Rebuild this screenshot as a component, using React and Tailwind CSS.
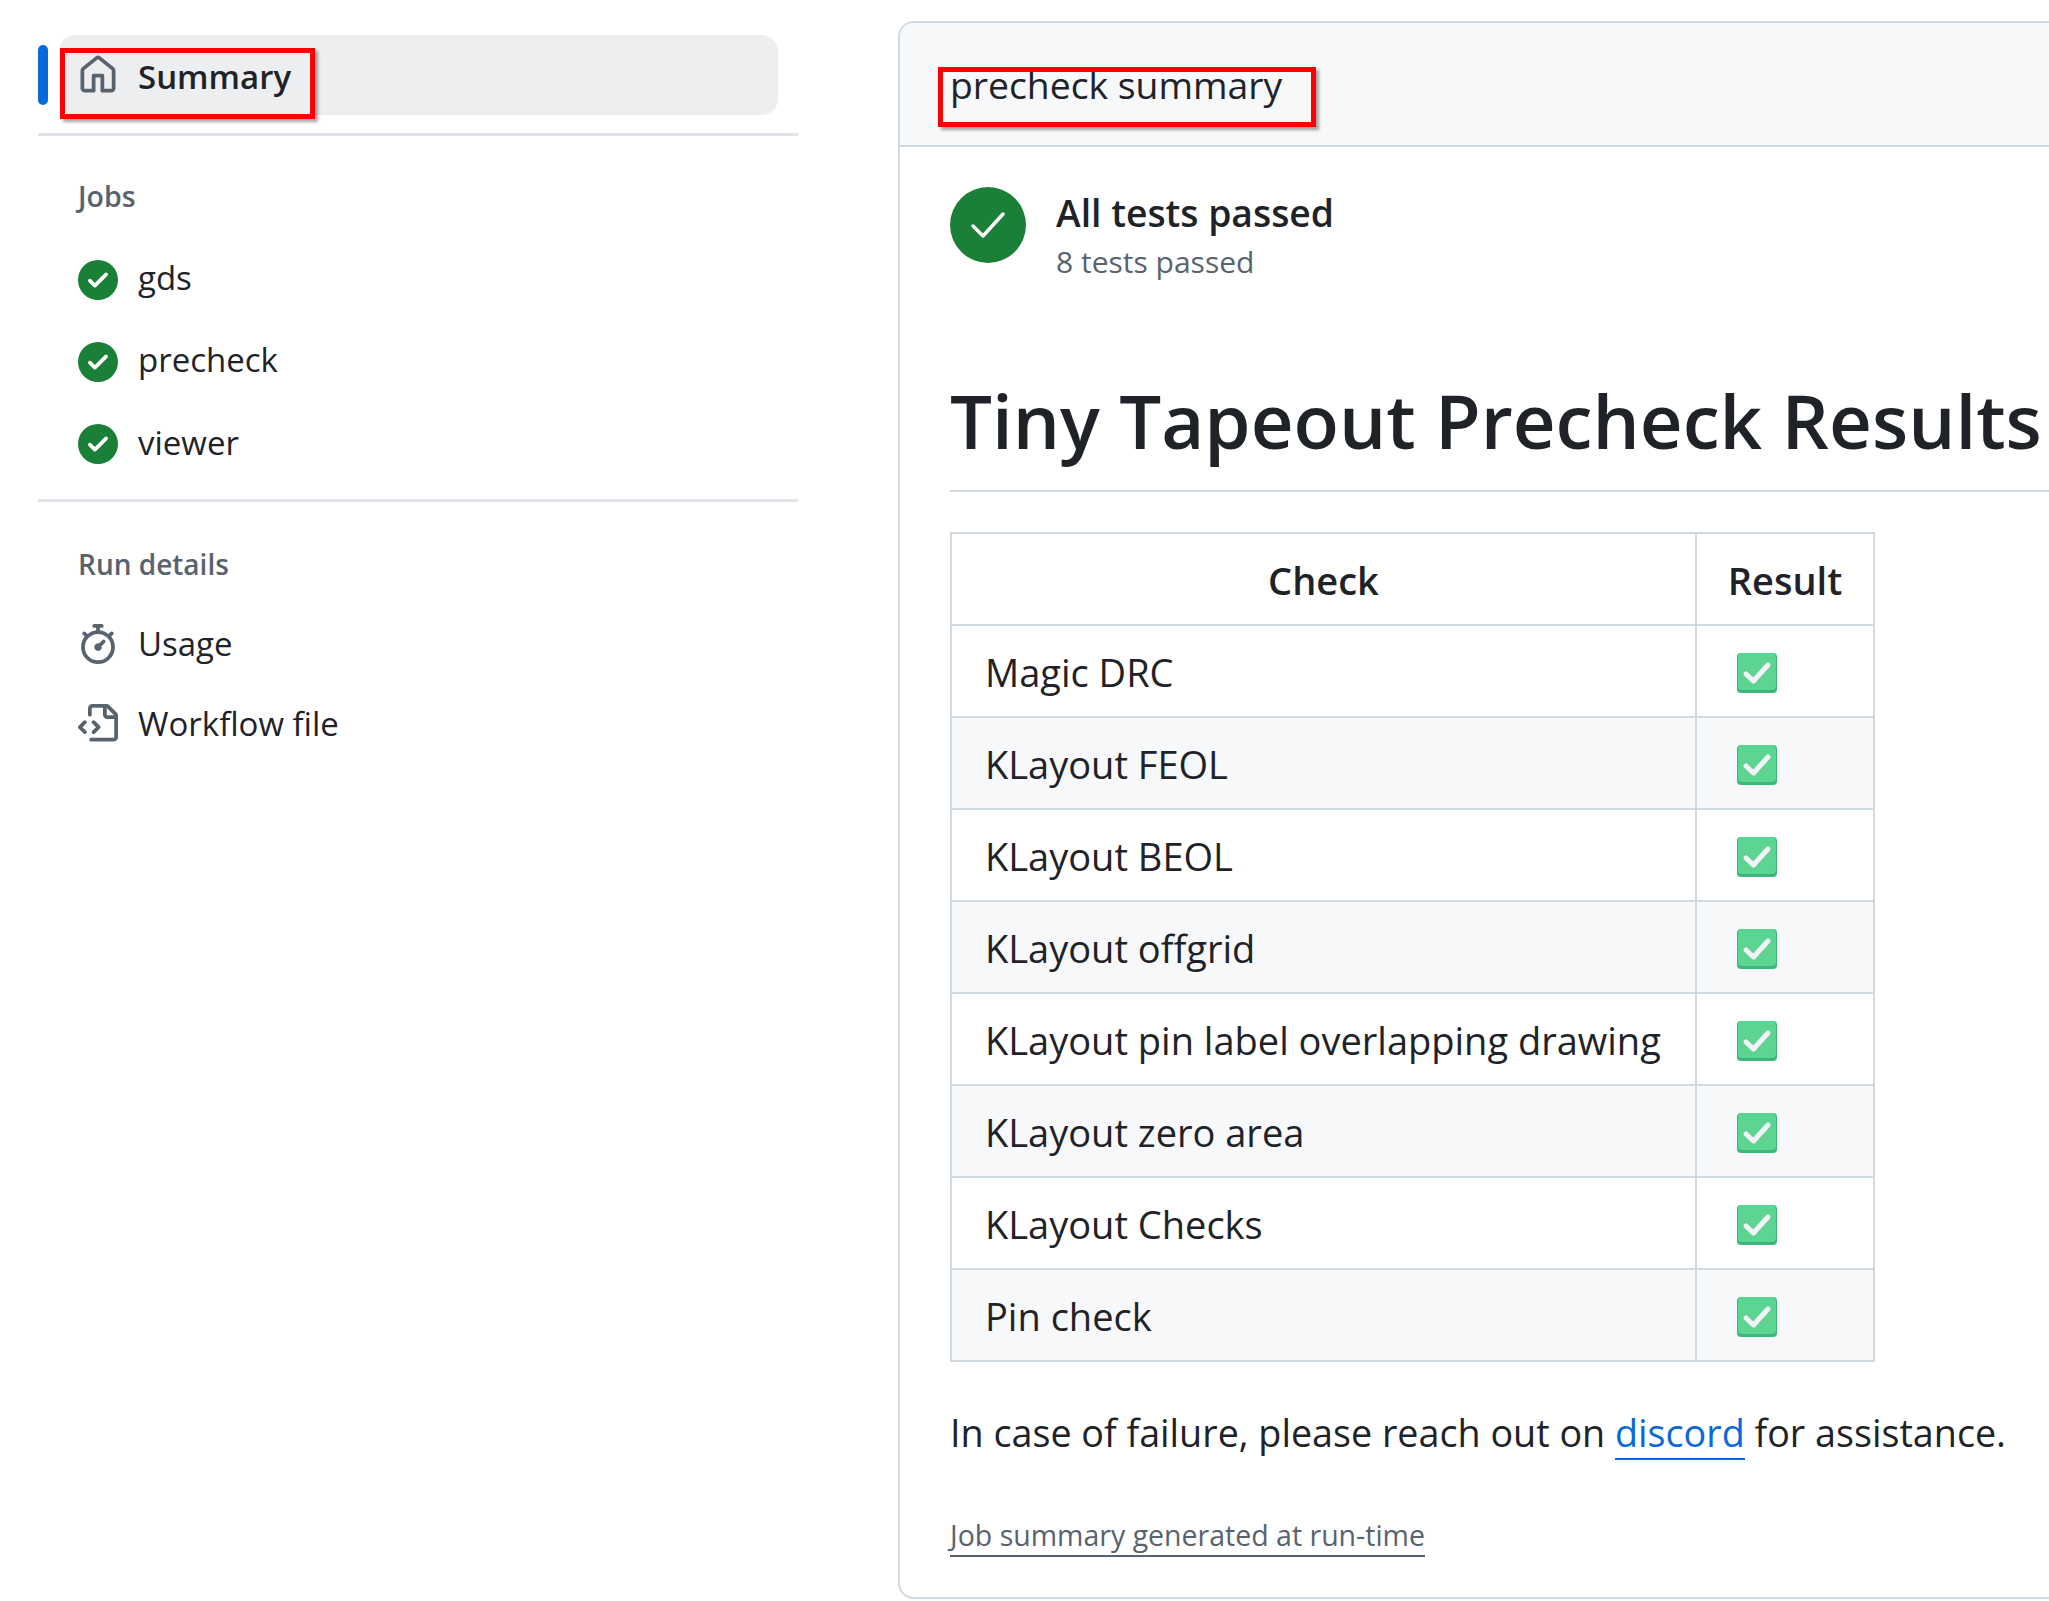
import React from "react";

const font = { fontFamily: '"Open Sans", "Noto Sans", sans-serif' };

const paths = {
  home: "M6.906.664a1.749 1.749 0 0 1 2.187 0l5.25 4.2c.415.332.657.835.657 1.367v7.019A1.75 1.75 0 0 1 13.25 15h-3.5a.75.75 0 0 1-.75-.75V9H7v5.25a.75.75 0 0 1-.75.75h-3.5A1.75 1.75 0 0 1 1 13.25V6.23c0-.531.242-1.034.657-1.366l5.25-4.2Zm1.25 1.171a.25.25 0 0 0-.312 0l-5.25 4.2a.25.25 0 0 0-.094.196v7.019c0 .138.112.25.25.25H5.5V8.25a.75.75 0 0 1 .75-.75h3.5a.75.75 0 0 1 .75.75v5.25h2.75a.25.25 0 0 0 .25-.25V6.23a.25.25 0 0 0-.094-.195Z",
  check: "M8 16A8 8 0 1 1 8 0a8 8 0 0 1 0 16Zm3.78-9.72a.751.751 0 0 0-.018-1.042.751.751 0 0 0-1.042-.018L6.75 9.19 5.28 7.72a.751.751 0 0 0-1.042.018.751.751 0 0 0-.018 1.042l2 2a.75.75 0 0 0 1.06 0Z",
  stopwatch: "M5.75.75A.75.75 0 0 1 6.5 0h3a.75.75 0 0 1 0 1.5h-.75v1l-.001.041a6.724 6.724 0 0 1 3.464 1.435l.007-.006.75-.75a.751.751 0 0 1 1.042.018.751.751 0 0 1 .018 1.042l-.75.75-.006.007a6.75 6.75 0 1 1-10.548 0L2.72 5.03l-.75-.75a.751.751 0 0 1 .018-1.042.751.751 0 0 1 1.042-.018l.75.75.007.006A6.72 6.72 0 0 1 7.25 2.541V1.5H6.5a.75.75 0 0 1-.75-.75ZM8 14.5a5.25 5.25 0 1 0-.001-10.501A5.25 5.25 0 0 0 8 14.5Zm.389-6.7 1.33-1.33a.75.75 0 1 1 1.061 1.06L9.45 8.861A1.503 1.503 0 0 1 8 10.75a1.499 1.499 0 1 1 .389-2.95Z",
  file: "M4 1.75C4 .784 4.784 0 5.75 0h5.586c.464 0 .909.184 1.237.513l2.914 2.914c.329.328.513.773.513 1.237v8.586A1.75 1.75 0 0 1 14.25 15h-9a.75.75 0 0 1 0-1.5h9a.25.25 0 0 0 .25-.25V6h-2.75A1.75 1.75 0 0 1 10 4.25V1.5H5.75a.25.25 0 0 0-.25.25v2.5a.75.75 0 0 1-1.5 0Zm1.72 4.97a.75.75 0 0 1 1.06 0l2 2a.75.75 0 0 1 0 1.06l-2 2a.749.749 0 0 1-1.275-.326.749.749 0 0 1 .215-.734l1.47-1.47-1.47-1.47a.75.75 0 0 1 0-1.06ZM3.28 7.78 1.81 9.25l1.47 1.47a.751.751 0 0 1-.018 1.042.751.751 0 0 1-1.042.018l-2-2a.75.75 0 0 1 0-1.06l2-2a.751.751 0 0 1 1.042.018.751.751 0 0 1 .018 1.042Zm8.22-6.218V4.25c0 .138.112.25.25.25h2.688l-.011-.013-2.914-2.914-.013-.011Z",
};

const checks = [
  "Magic DRC",
  "KLayout FEOL",
  "KLayout BEOL",
  "KLayout offgrid",
  "KLayout pin label overlapping drawing",
  "KLayout zero area",
  "KLayout Checks",
  "Pin check",
];

function Octicon({ d, className }) {
  return (
    <svg viewBox="0 0 16 16" fill="currentColor" className={className}>
      <path d={d} />
    </svg>
  );
}

function CheckEmoji() {
  return (
    <svg viewBox="0 0 40 40" className="w-[40px] h-[40px] block">
      <rect x="0" y="0" width="40" height="40" rx="4" fill="#3fb57c" />
      <rect x="1" y="0" width="38" height="37" rx="4" fill="#5cd593" />
      <path d="M9 21l7.5 7L31 12" fill="none" stroke="#f3f1fa" strokeWidth="5" strokeLinecap="round" strokeLinejoin="round" />
    </svg>
  );
}

function RedBox({ className }) {
  return <div className={`absolute border-[5px] border-[#ff0000] shadow-[3px_3px_3px_rgba(0,0,0,0.35)] ${className}`} />;
}

function SideItem({ icon, iconClass, label, height }) {
  return (
    <div className={`flex items-center pl-[40px] ${height}`}>
      <Octicon d={icon} className={`w-[40px] h-[40px] shrink-0 ${iconClass}`} />
      <span className="ml-[20px] text-[33px] text-[#1f2328]">{label}</span>
    </div>
  );
}

export default function App() {
  return (
    <div style={font} className="relative flex w-[2049px] h-[1601px] overflow-hidden bg-white">
      <aside className="w-[760px] ml-[38px] mr-[100px] shrink-0">
        <div className="flex items-center h-[80px] mt-[35px] relative">
          <div className="absolute left-0 top-[10px] w-[10px] h-[60px] rounded-full bg-[#0969da]" />
          <div className="flex items-center ml-[21px] pl-[19px] w-[719px] h-[80px] rounded-[16px] bg-[#eceef0]">
            <Octicon d={paths.home} className="w-[40px] h-[40px] text-[#59636e]" />
            <span className="ml-[20px] pt-[4px] text-[33px] font-semibold text-[#1f2328]">Summary</span>
          </div>
        </div>
        <div className="mt-[18px] border-t-[3px] border-[#e1e5ea]" />
        <div className="mt-[40px] pl-[40px] text-[28.5px] leading-[40px] font-semibold text-[#59636e]">Jobs</div>
        <div className="mt-[21px]">
          <SideItem icon={paths.check} iconClass="mt-[3px] text-[#1a7f37]" label="gds" height="h-[82px]" />
          <SideItem icon={paths.check} iconClass="mt-[3px] text-[#1a7f37]" label="precheck" height="h-[82px]" />
          <SideItem icon={paths.check} iconClass="mt-[3px] text-[#1a7f37]" label="viewer" height="h-[83px]" />
        </div>
        <div className="mt-[15px] border-t-[3px] border-[#e1e5ea]" />
        <div className="mt-[42px] pl-[40px] text-[28px] leading-[40px] font-semibold text-[#59636e]">Run details</div>
        <div className="mt-[20px]">
          <SideItem icon={paths.stopwatch} iconClass="text-[#59636e]" label="Usage" height="h-[80px]" />
          <SideItem icon={paths.file} iconClass="text-[#59636e]" label="Workflow file" height="h-[80px]" />
        </div>
      </aside>

      <main className="mt-[21px] mb-[2px] w-[1300px] shrink-0 border-2 border-[#d1d9e0] rounded-[16px] overflow-hidden">
        <div className="flex items-center h-[124px] pl-[50px] pt-[1px] bg-[#f6f8fa] border-b-2 border-[#d1d9e0] text-[37.3px] text-[#1f2328]">
          precheck summary
        </div>
        <div className="pl-[50px] pt-[40px]">
          <div className="flex items-center h-[76px]">
            <svg viewBox="0 0 76 76" className="w-[76px] h-[76px] shrink-0">
              <circle cx="38" cy="38" r="38" fill="#1a7f37" />
              <path d="M23 39l10 10 20-22" fill="none" stroke="#fff" strokeWidth="3.5" strokeLinecap="round" strokeLinejoin="round" />
            </svg>
            <div className="ml-[30px] mt-[24px]">
              <div className="text-[37.3px] leading-[50px] font-semibold text-[#1f2328]">All tests passed</div>
              <div className="text-[30px] leading-[48px] text-[#59636e]">8 tests passed</div>
            </div>
          </div>

          <h1 className="mt-[106px] pb-[19px] text-[74.4px] leading-[102px] font-semibold text-[#1f2328] border-b-2 border-[#d1d9e0] whitespace-nowrap">
            Tiny Tapeout Precheck Results
          </h1>

          <table className="mt-[40px] w-[925px] border-collapse text-[38px] text-[#1f2328] table-fixed">
            <thead>
              <tr className="h-[92px]">
                <th className="w-[745px] pt-[2px] border-2 border-[#d1d9e0] font-semibold">Check</th>
                <th className="pt-[2px] border-2 border-[#d1d9e0] font-semibold">Result</th>
              </tr>
            </thead>
            <tbody>
              {checks.map((name, i) => (
                <tr key={name} className={`h-[92px] ${i % 2 === 0 ? "bg-white" : "bg-[#f6f8fa]"}`}>
                  <td className="border-2 border-[#d1d9e0] pl-[33px] pt-[2px] whitespace-nowrap">{name}</td>
                  <td className="border-2 border-[#d1d9e0] pl-[40px] pt-[3px]"><CheckEmoji /></td>
                </tr>
              ))}
            </tbody>
          </table>

          <p className="mt-[44px] text-[37.7px] leading-[54px] text-[#1f2328] whitespace-nowrap">
            In case of failure, please reach out on{" "}
            <span className="text-[#0969da] border-b-2 border-[#0969da]">discord</span> for assistance.
          </p>
          <div className="mt-[55px]">
            <span className="text-[28.5px] leading-[40px] text-[#59636e] border-b-2 border-[#59636e] inline-block">
              Job summary generated at run-time
            </span>
          </div>
        </div>
      </main>

      <RedBox className="left-[60px] top-[48px] w-[255px] h-[71px]" />
      <RedBox className="left-[938px] top-[67px] w-[378px] h-[60px]" />
    </div>
  );
}
